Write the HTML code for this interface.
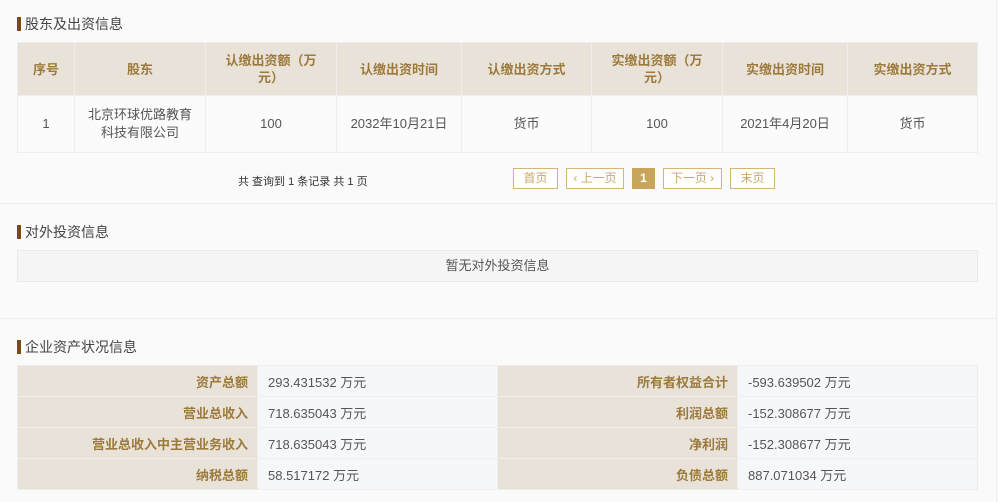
<!DOCTYPE html>
<html><head><meta charset="utf-8"><style>
*{margin:0;padding:0;box-sizing:border-box}
body{width:998px;height:502px;background:#fafafa;font-family:"Liberation Sans","Noto Sans CJK SC",sans-serif;font-size:12px;color:#555;position:relative;overflow:hidden}
.t{position:absolute;left:17px;font-size:14px;color:#444;line-height:16px;padding-left:8px}
.t:before{content:"";position:absolute;left:0;top:1px;width:4px;height:14px;background:#7a4a14}
table{border-collapse:collapse;position:absolute;left:17px;width:960px;table-layout:fixed}
td,th{border:1px solid #eee}
.sh th{background:#e8e2d8;color:#9c7a3c;font-weight:bold;font-size:13px;height:53px;text-align:center;line-height:17px}
.sh td{background:#fbfbfb;height:57px;text-align:center;font-size:13px;color:#555;line-height:18px}
.pg{position:absolute;top:168px;height:21px;border:1px solid #d4b47a;color:#c9a86a;font-size:12px;line-height:19px;text-align:center;background:#fff}
.hr{position:absolute;left:0;width:996px;height:1px;background:#eee}
.as td{height:31px;font-size:13px}
.as .l{background:#e8e2d8;color:#9c7a3c;font-weight:bold;text-align:right;padding-right:9px}
.as .v{background:#f6f7f9;color:#555;padding-left:10px}
</style></head><body>
<div class="t" style="top:16px">股东及出资信息</div>
<table class="sh" style="top:42px">
<colgroup><col style="width:57px"><col style="width:131px"><col style="width:131px"><col style="width:125px"><col style="width:130px"><col style="width:131px"><col style="width:125px"><col style="width:130px"></colgroup>
<tr><th>序号</th><th>股东</th><th>认缴出资额（万<br>元）</th><th>认缴出资时间</th><th>认缴出资方式</th><th>实缴出资额（万<br>元）</th><th>实缴出资时间</th><th>实缴出资方式</th></tr>
<tr><td>1</td><td>北京环球优路教育<br>科技有限公司</td><td>100</td><td>2032年10月21日</td><td>货币</td><td>100</td><td>2021年4月20日</td><td>货币</td></tr>
</table>
<div style="position:absolute;left:238px;top:173px;font-size:11px;color:#333">共 查询到 1 条记录 共 1 页</div>
<div class="pg" style="left:513px;width:45px">首页</div>
<div class="pg" style="left:566px;width:58px">‹ 上一页</div>
<div class="pg" style="left:632px;width:23px;background:#c9a45c;border-color:#c9a45c;color:#fff;font-weight:bold">1</div>
<div class="pg" style="left:663px;width:59px">下一页 ›</div>
<div class="pg" style="left:730px;width:45px">末页</div>
<div class="hr" style="top:203px"></div>
<div class="t" style="top:224px">对外投资信息</div>
<div style="position:absolute;left:17px;top:250px;width:961px;height:32px;border:1px solid #eaeaea;background:#f5f5f5;text-align:center;line-height:30px;font-size:13px;color:#555">暂无对外投资信息</div>
<div class="hr" style="top:318px"></div>
<div class="t" style="top:339px">企业资产状况信息</div>
<table class="as" style="top:365px">
<colgroup><col style="width:240px"><col style="width:240px"><col style="width:240px"><col style="width:240px"></colgroup>
<tr><td class="l">资产总额</td><td class="v">293.431532 万元</td><td class="l">所有者权益合计</td><td class="v">-593.639502 万元</td></tr>
<tr><td class="l">营业总收入</td><td class="v">718.635043 万元</td><td class="l">利润总额</td><td class="v">-152.308677 万元</td></tr>
<tr><td class="l">营业总收入中主营业务收入</td><td class="v">718.635043 万元</td><td class="l">净利润</td><td class="v">-152.308677 万元</td></tr>
<tr><td class="l">纳税总额</td><td class="v">58.517172 万元</td><td class="l">负债总额</td><td class="v">887.071034 万元</td></tr>
</table>
<div style="position:absolute;left:996px;top:0;width:1px;height:502px;background:#eee"></div>
</body></html>
